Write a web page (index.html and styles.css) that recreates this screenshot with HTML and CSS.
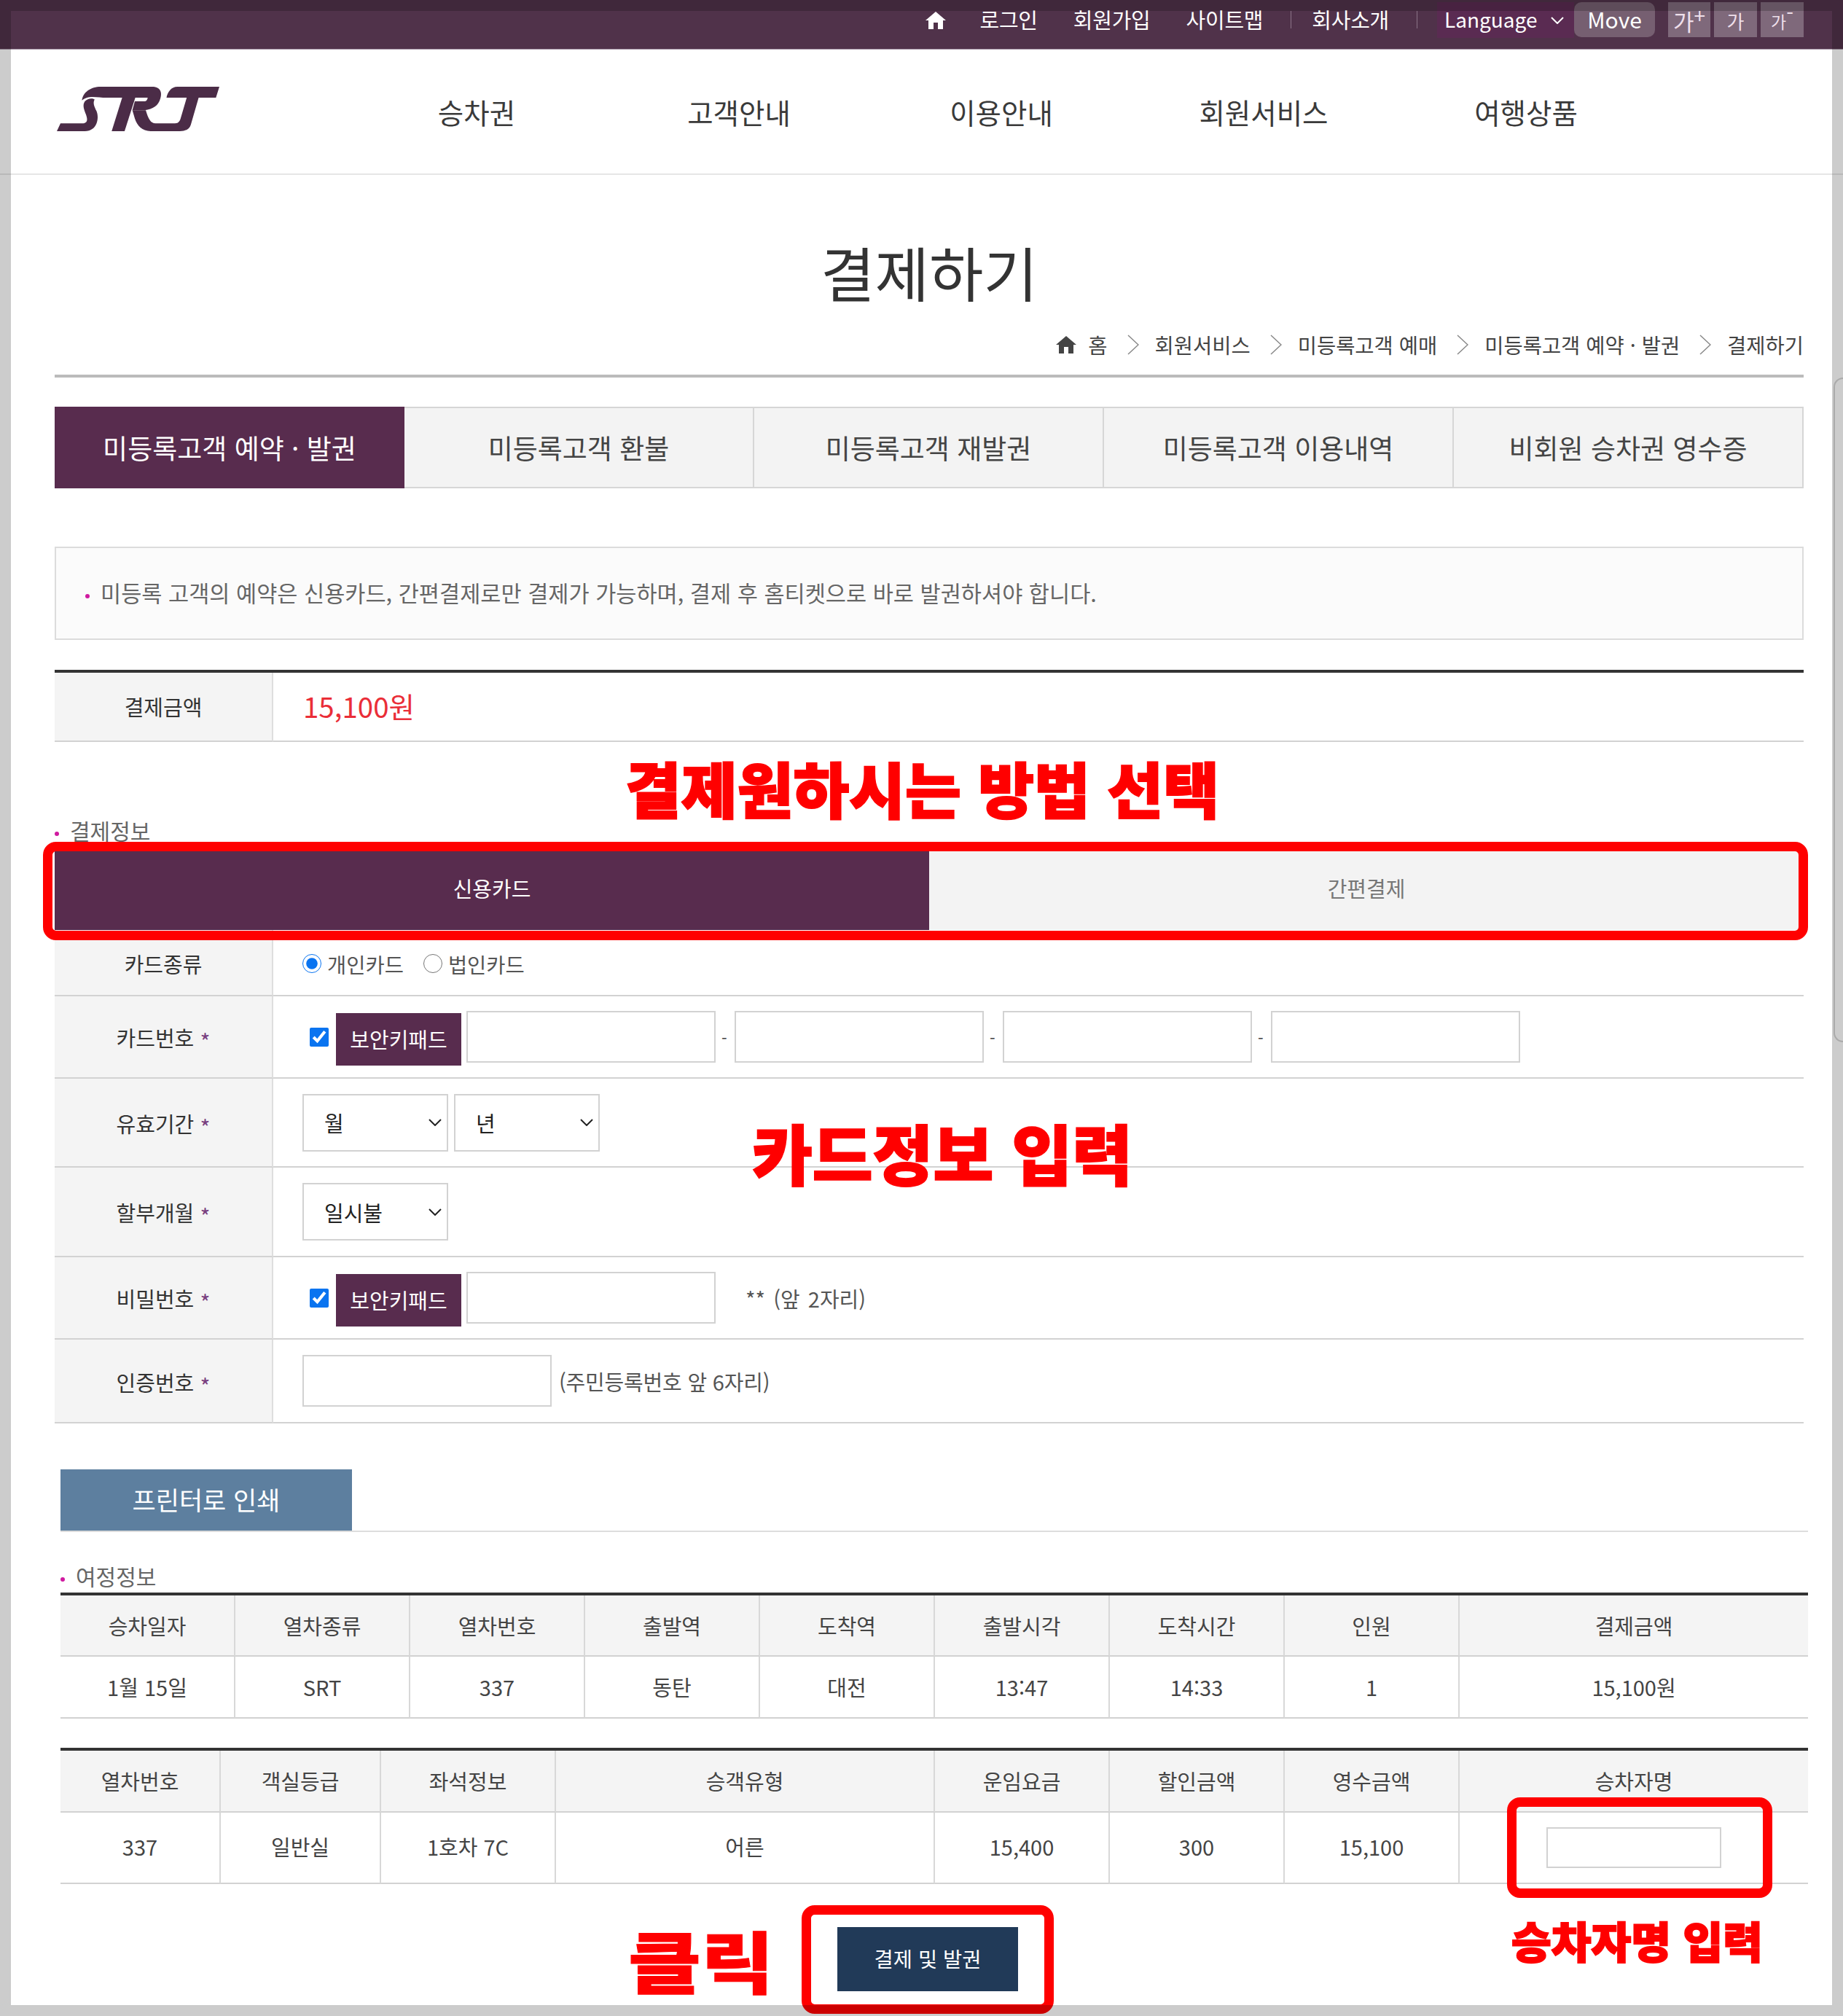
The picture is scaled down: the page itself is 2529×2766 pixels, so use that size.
FILE: index.html
```html
<!DOCTYPE html>
<html lang="ko">
<head>
<meta charset="utf-8">
<title>결제하기</title>
<link rel="stylesheet" href="styles.css">
</head>
<body>
<div class="page">
  <header>
    <div class="topbar">
      <svg class="home-icon" viewBox="0 0 28 24"><path d="M14 0 L28 12 L24 12 L24 24 L17 24 L17 15 L11 15 L11 24 L4 24 L4 12 L0 12 Z"/></svg>
      <a class="tl tl-login">로그인</a>
      <a class="tl">회원가입</a>
      <a class="tl">사이트맵</a>
      <i class="tdiv"></i>
      <a class="tl">회사소개</a>
      <i class="tdiv"></i>
      <div class="lang">Language
        <svg class="lang-chev" viewBox="0 0 18 10"><path d="M1 1 L9 9 L17 1"/></svg>
      </div>
      <a class="move">Move</a>
      <a class="fs fs-plus">가<sup>+</sup></a>
      <a class="fs fs-mid">가</a>
      <a class="fs fs-minus">가<sup>-</sup></a>
    </div>
    <div class="navbar">
      <svg class="logo" viewBox="25 40 667 182" preserveAspectRatio="none">
        <path d="M128 96 C132 62 165 40 205 40 L415 40 C450 40 458 62 450 88 C442 118 420 132 385 136 L335 136 L345 100 L385 100 C392 100 396 95 398 85 L230 85 C190 85 155 72 128 96 Z"/>
        <path d="M140 100 C150 88 170 85 180 92 C172 105 178 120 188 140 C200 170 190 222 140 222 L25 222 L40 190 L130 190 C155 190 150 170 145 155 C135 130 130 115 140 100 Z"/>
        <path d="M293 85 L347 85 L303 222 L250 222 Z"/>
        <path d="M335 136 L390 136 C400 170 410 190 430 190 L510 190 C525 190 530 180 533 170 L558 85 L475 85 C480 60 495 40 520 40 L692 40 L678 85 L607 85 L575 195 C570 212 555 222 530 222 L410 222 C375 222 355 200 345 170 Z"/>
      </svg>
      <nav class="gnb">
        <a>승차권</a><a>고객안내</a><a>이용안내</a><a>회원서비스</a><a>여행상품</a>
      </nav>
    </div>
  </header>

  <main>
    <h1 class="title">결제하기</h1>
    <div class="crumbs">
      <svg class="crumb-home" viewBox="0 0 28 24"><path d="M14 0 L28 12 L24 12 L24 24 L17 24 L17 15 L11 15 L11 24 L4 24 L4 12 L0 12 Z"/></svg>
      <span>홈</span>
      <svg class="crumb-sep" viewBox="0 0 16 28"><path d="M1 1 L15 14 L1 27"/></svg>
      <span>회원서비스</span>
      <svg class="crumb-sep" viewBox="0 0 16 28"><path d="M1 1 L15 14 L1 27"/></svg>
      <span>미등록고객 예매</span>
      <svg class="crumb-sep" viewBox="0 0 16 28"><path d="M1 1 L15 14 L1 27"/></svg>
      <span>미등록고객 예약 · 발권</span>
      <svg class="crumb-sep" viewBox="0 0 16 28"><path d="M1 1 L15 14 L1 27"/></svg>
      <span>결제하기</span>
    </div>

    <div class="tabs">
      <a class="tab tab-on">미등록고객 예약 · 발권</a>
      <a class="tab">미등록고객 환불</a>
      <a class="tab">미등록고객 재발권</a>
      <a class="tab">미등록고객 이용내역</a>
      <a class="tab">비회원 승차권 영수증</a>
    </div>

    <div class="notice"><i class="dot"></i>미등록 고객의 예약은 신용카드, 간편결제로만 결제가 가능하며, 결제 후 홈티켓으로 바로 발권하셔야 합니다.</div>

    <table class="form amount">
      <tr><th>결제금액</th><td class="price">15,100원</td></tr>
    </table>

    <h2 class="sec sec-pay"><i class="dot"></i>결제정보</h2>
    <div class="paytabs">
      <a class="pay pay-on">신용카드</a>
      <a class="pay">간편결제</a>
    </div>

    <table class="form">
      <tr class="r1">
        <th>카드종류</th>
        <td><div class="field">
          <label class="rad"><input type="radio" name="ct" checked>개인카드</label>
          <label class="rad"><input type="radio" name="ct">법인카드</label>
        </div></td>
      </tr>
      <tr class="r2">
        <th>카드번호 <b>*</b></th>
        <td><div class="field">
          <input class="chk" type="checkbox" checked><a class="keypad">보안키패드</a>
          <input class="txt" type="text"><span class="dash">-</span>
          <input class="txt" type="text"><span class="dash">-</span>
          <input class="txt" type="text"><span class="dash">-</span>
          <input class="txt" type="text">
        </div></td>
      </tr>
      <tr class="r3">
        <th>유효기간 <b>*</b></th>
        <td><div class="field selects">
          <select class="sel"><option>월</option></select>
          <select class="sel"><option>년</option></select>
        </div></td>
      </tr>
      <tr class="r4">
        <th>할부개월 <b>*</b></th>
        <td><div class="field">
          <select class="sel"><option>일시불</option></select>
        </div></td>
      </tr>
      <tr class="r5">
        <th>비밀번호 <b>*</b></th>
        <td><div class="field">
          <input class="chk" type="checkbox" checked><a class="keypad">보안키패드</a>
          <input class="txt" type="password"><span class="hint hint-pw">** (앞 2자리)</span>
        </div></td>
      </tr>
      <tr class="r6">
        <th>인증번호 <b>*</b></th>
        <td><div class="field">
          <input class="txt" type="text"><span class="hint hint-id">(주민등록번호 앞 6자리)</span>
        </div></td>
      </tr>
    </table>

    <div class="wide printrow"><a class="print">프린터로 인쇄</a></div>

    <div class="wide">
      <h2 class="sec sec-trip"><i class="dot"></i>여정정보</h2>
      <table class="grid trip">
        <colgroup><col class="w240"><col class="w240"><col class="w240"><col class="w240"><col class="w240"><col class="w240"><col class="w240"><col class="w240"><col></colgroup>
        <tr class="h84">
          <th>승차일자</th><th>열차종류</th><th>열차번호</th><th>출발역</th><th>도착역</th><th>출발시각</th><th>도착시간</th><th>인원</th><th>결제금액</th>
        </tr>
        <tr class="h85">
          <td>1월 15일</td><td>SRT</td><td>337</td><td>동탄</td><td>대전</td><td>13:47</td><td>14:33</td><td>1</td><td>15,100원</td>
        </tr>
      </table>
      <table class="grid seat">
        <colgroup><col class="w220"><col class="w220"><col class="w240"><col class="w520"><col class="w240"><col class="w240"><col class="w240"><col></colgroup>
        <tr class="h85">
          <th>열차번호</th><th>객실등급</th><th>좌석정보</th><th>승객유형</th><th>운임요금</th><th>할인금액</th><th>영수금액</th><th>승차자명</th>
        </tr>
        <tr class="h98">
          <td>337</td><td>일반실</td><td>1호차 7C</td><td>어른</td><td>15,400</td><td>300</td><td>15,100</td><td class="name-cell"><input class="name" type="text"></td>
        </tr>
      </table>
    </div>

    <div class="actions"><a class="submit">결제 및 발권</a></div>
  </main>

  <div class="mark mark-pay"></div>
  <div class="mark mark-name"></div>
  <div class="mark mark-btn"></div>
  <div class="ann ann-pay">결제원하시는 방법 선택</div>
  <div class="ann ann-card">카드정보 입력</div>
  <div class="ann ann-click">클릭</div>
  <div class="ann ann-name">승차자명 입력</div>

  <div class="frame"></div>
  <div class="handle"></div>
</div>
</body>
</html>
```

FILE: styles.css
```css
* { box-sizing: border-box; }
html, body { margin: 0; padding: 0; background: #fff; }
body {
  font-family: "Noto Sans CJK KR", "Noto Sans", sans-serif;
  font-weight: 400;
  color: #444;
  font-size: 29px;
}
a { color: inherit; text-decoration: none; }
i { font-style: normal; }
.page { position: relative; width: 2529px; height: 2766px; overflow: hidden; }

/* top bar */
.topbar {
  height: 68px;
  background: #50324a;
  border-bottom: 1px solid #a08ea0;
  color: #fff;
  display: flex;
  align-items: flex-start;
  padding: 3px 54px 0 0;
  justify-content: flex-end;
  font-size: 29px;
  line-height: 46px;
}
.home-icon { width: 28px; height: 24px; fill: #fff; margin: 13px 47px 0 0; }
.tl { margin-right: 49px; letter-spacing: -0.25px; }
.tdiv { width: 1px; height: 24px; background: #8b7488; margin: 12px 28px 0 -11px; }
.lang {
  width: 188px;
  height: 49px;
  padding-left: 10px;
  margin-left: -1px;
  background: #5a2b52;
  display: flex;
  align-items: flex-start;
  font-size: 28px;
}
.lang-chev { width: 18px; height: 10px; fill: none; stroke: #fff; stroke-width: 2; margin: 20px 0 0 18px; }
.move {
  width: 111px;
  height: 48px;
  border-radius: 10px;
  background: rgba(255,255,255,.22);
  text-align: center;
  font-size: 30px;
  margin-right: 18px;
}
.fs {
  width: 59px;
  height: 48px;
  background: rgba(255,255,255,.27);
  color: #eedfea;
  text-align: center;
  margin-right: 5px;
  line-height: 52px;
}
.fs-plus { font-size: 31px; width: 58px; }
.fs-mid { font-size: 26px; }
.fs-minus { font-size: 23px; margin-right: 0; }
.fs sup { font-size: 28px; line-height: 0; vertical-align: 10px; }

/* nav */
.navbar {
  height: 172px;
  border-bottom: 2px solid #e6e6e6;
  display: flex;
  align-items: center;
  padding-left: 78px;
}
.logo { width: 223px; height: 61px; fill: #4b2c47; margin-bottom: 8px; flex: none; }
.gnb { display: flex; margin-left: 173px; color: #3a3a3a; font-size: 38.5px; }
.gnb a { width: 360px; text-align: center; }

/* main */
main { padding: 0 54px 34px 75px; }
.title {
  margin: 82px 0 0;
  font-size: 81px;
  line-height: 100px;
  font-weight: 400;
  text-align: center;
  color: #333;
}
.crumbs {
  margin-top: 31px;
  padding-bottom: 21px;
  border-bottom: 4px solid #bbb;
  display: flex;
  justify-content: flex-end;
  align-items: center;
  font-size: 28.5px;
  line-height: 40px;
  color: #444;
}
.crumb-home { width: 28px; height: 24px; fill: #444; margin-right: 16px; }
.crumb-sep { width: 16px; height: 28px; fill: none; stroke: #888; stroke-width: 1.5; margin: 0 22px 0 27px; }

.tabs {
  margin-top: 40px;
  display: grid;
  grid-template-columns: repeat(5, 1fr);
  height: 112px;
  font-size: 37px;
}
.tab {
  background: #f3f3f3;
  border: 2px solid #d6d6d6;
  border-left: 0;
  color: #444;
  display: flex;
  align-items: center;
  justify-content: center;
}
.tab:first-child { border-left: 2px solid #d6d6d6; }
.tab-on { background: #582c4e; border-color: #582c4e; color: #fff; }
.tab-on:first-child { border-color: #582c4e; }

.dot { display: inline-block; width: 6px; height: 6px; border-radius: 50%; background: #d01aa0; vertical-align: middle; }
.notice {
  margin-top: 80px;
  height: 128px;
  border: 2px solid #dcdcdc;
  background: #fbfbfb;
  color: #666;
  font-size: 30.6px;
  line-height: 122px;
  padding-left: 40px;
  white-space: nowrap;
}
.notice .dot { margin-right: 15px; }

/* form tables */
.form { width: 100%; border-collapse: separate; border-spacing: 0; table-layout: fixed; }
.form th {
  width: 300px;
  background: #f4f4f4;
  border-right: 2px solid #dedede;
  border-bottom: 2px solid #d2d2d2;
  font-weight: 400;
  color: #333;
  padding: 0;
  text-align: center;
}
.form th b { color: #7a3f80; font-weight: 400; font-size: 30px; line-height: 0; vertical-align: -5px; }
.form td { border-bottom: 2px solid #d2d2d2; padding: 0 0 0 40px; }
.amount { margin-top: 41px; border-top: 4px solid #333; }
.amount tr { height: 95px; }
.amount th { padding-bottom: 2px; }
.form td.price { color: #ea2e38; font-size: 38.5px; padding: 0 0 4px 41px; }
.r1 { height: 91px; }
.r2 { height: 113px; }
.r3 { height: 122px; }
.r4 { height: 123px; }
.r5 { height: 113px; }
.r6 { height: 115px; }
.form .r1 th, .form .r3 th, .form .r6 th { padding-top: 2px; }
.field { display: flex; align-items: center; }
.rad { display: flex; align-items: center; margin-right: 27px; color: #555; font-size: 28.5px; padding-top: 3px; }
.rad input { width: 26px; height: 26px; margin: 0 8px 0 0; accent-color: #0a74f0; }
.chk { width: 26px; height: 26px; margin: 0 10px 0 10px; accent-color: #0a74f0; }
.keypad {
  width: 172px;
  height: 72px;
  margin: 6px 7px 0 0;
  background: #582c4e;
  color: #fff;
  text-align: center;
  line-height: 70px;
}
.txt {
  width: 342px;
  height: 71px;
  border: 2px solid #d2d2d2;
  background: #fff;
  outline: 0;
  padding: 0;
}
.dash { width: 26px; padding-left: 8px; color: #444; font-size: 22px; }
.sel {
  width: 200px;
  height: 79px;
  border: 2px solid #d2d2d2;
  background-color: #fff;
  background-image: url("data:image/svg+xml,%3Csvg xmlns='http://www.w3.org/2000/svg' viewBox='0 0 18 10'%3E%3Cpath d='M1 1 L9 9 L17 1' fill='none' stroke='%23222' stroke-width='2'/%3E%3C/svg%3E");
  background-repeat: no-repeat;
  background-position: right 7px center;
  background-size: 18px 10px;
  appearance: none;
  color: #222;
  font: inherit;
  padding-left: 28px;
  margin-right: 8px;
  border-radius: 0;
}
.hint { color: #555; }
.hint-pw { margin-left: 41px; word-spacing: 3px; }
.hint-id { margin-left: 10px; letter-spacing: -.2px; }

.sec { margin: 0; font-size: 30px; line-height: 40px; font-weight: 400; color: #666; }
.sec-pay { margin-top: 101px; margin-bottom: 9px; }
.sec-pay .dot { margin-right: 15px; }
.sec-trip { margin-top: 40px; margin-bottom: 3px; }
.sec-trip .dot { margin-right: 15px; }

.paytabs { display: grid; grid-template-columns: 1fr 1fr; height: 108px; font-size: 29px; }
.pay { background: #f3f3f3; color: #777; display: flex; align-items: center; justify-content: center; padding-bottom: 9px; }
.pay-on { background: #582c4e; color: #fff; }

.wide { margin: 0 -6px 0 8px; }
.printrow { margin-top: 63px; border-bottom: 2px solid #ddd; display: flex; }
.print {
  width: 400px;
  height: 84px;
  background: #5d7f9f;
  color: #fff;
  font-size: 35px;
  line-height: 82px;
  text-align: center;
}

.grid { width: 100%; table-layout: fixed; border-collapse: separate; border-spacing: 0; border-top: 4px solid #333; }
.grid th, .grid td {
  padding: 0 0 2px;
  text-align: center;
  font-weight: 400;
  color: #444;
  border-right: 2px solid #d8d8d8;
  border-bottom: 2px solid #d2d2d2;
}
.grid th { background: #f4f4f4; }
.grid th:last-child, .grid td:last-child { border-right: 0; }
.trip th { padding-bottom: 0; }
.seat td { padding-bottom: 4px; }
.grid td.name-cell { padding: 0; }
.seat { margin-top: 40px; }
.w220 { width: 220px; }
.w240 { width: 240px; }
.w520 { width: 520px; }
.h84 { height: 84px; }
.h85 { height: 85px; }
.h98 { height: 98px; }
.name { width: 240px; height: 56px; border: 2px solid #d2d2d2; background: #fff; padding: 0; vertical-align: middle; }

.actions { margin-top: 59px; display: flex; justify-content: center; padding-right: 4px; }
.submit {
  width: 248px;
  height: 88px;
  background: #213a58;
  color: #fff;
  font-size: 28.5px;
  line-height: 86px;
  text-align: center;
}

/* red annotations drawn over the screenshot */
.mark { position: absolute; border: 13px solid #f00; border-radius: 18px; }
.mark-pay { left: 59px; top: 1155px; width: 2422px; height: 135px; }
.mark-name { left: 2068px; top: 2466px; width: 364px; height: 138px; }
.mark-btn { left: 1100px; top: 2614px; width: 346px; height: 149px; }
.ann {
  position: absolute;
  color: #f00;
  font-weight: 900;
  white-space: nowrap;
  -webkit-text-stroke: 2px #f00;
  line-height: 1;
  transform-origin: left center;
}
.ann-pay { left: 858px; top: 1038px; font-size: 83.5px; }
.ann-card { left: 1032px; top: 1535px; font-size: 90px; }
.ann-click { left: 862px; top: 2642px; font-size: 92px; transform: scaleX(1.18); -webkit-text-stroke-width: 1px; }
.ann-name { left: 2074px; top: 2632px; font-size: 59.5px; }

.frame { position: absolute; inset: 0; border: 15px solid rgba(0,0,0,.2); pointer-events: none; }
.handle {
  position: absolute;
  right: 0;
  top: 518px;
  width: 13px;
  height: 912px;
  border: 2px solid #aaa;
  border-right: 0;
  border-radius: 24px 0 0 24px;
}
```
